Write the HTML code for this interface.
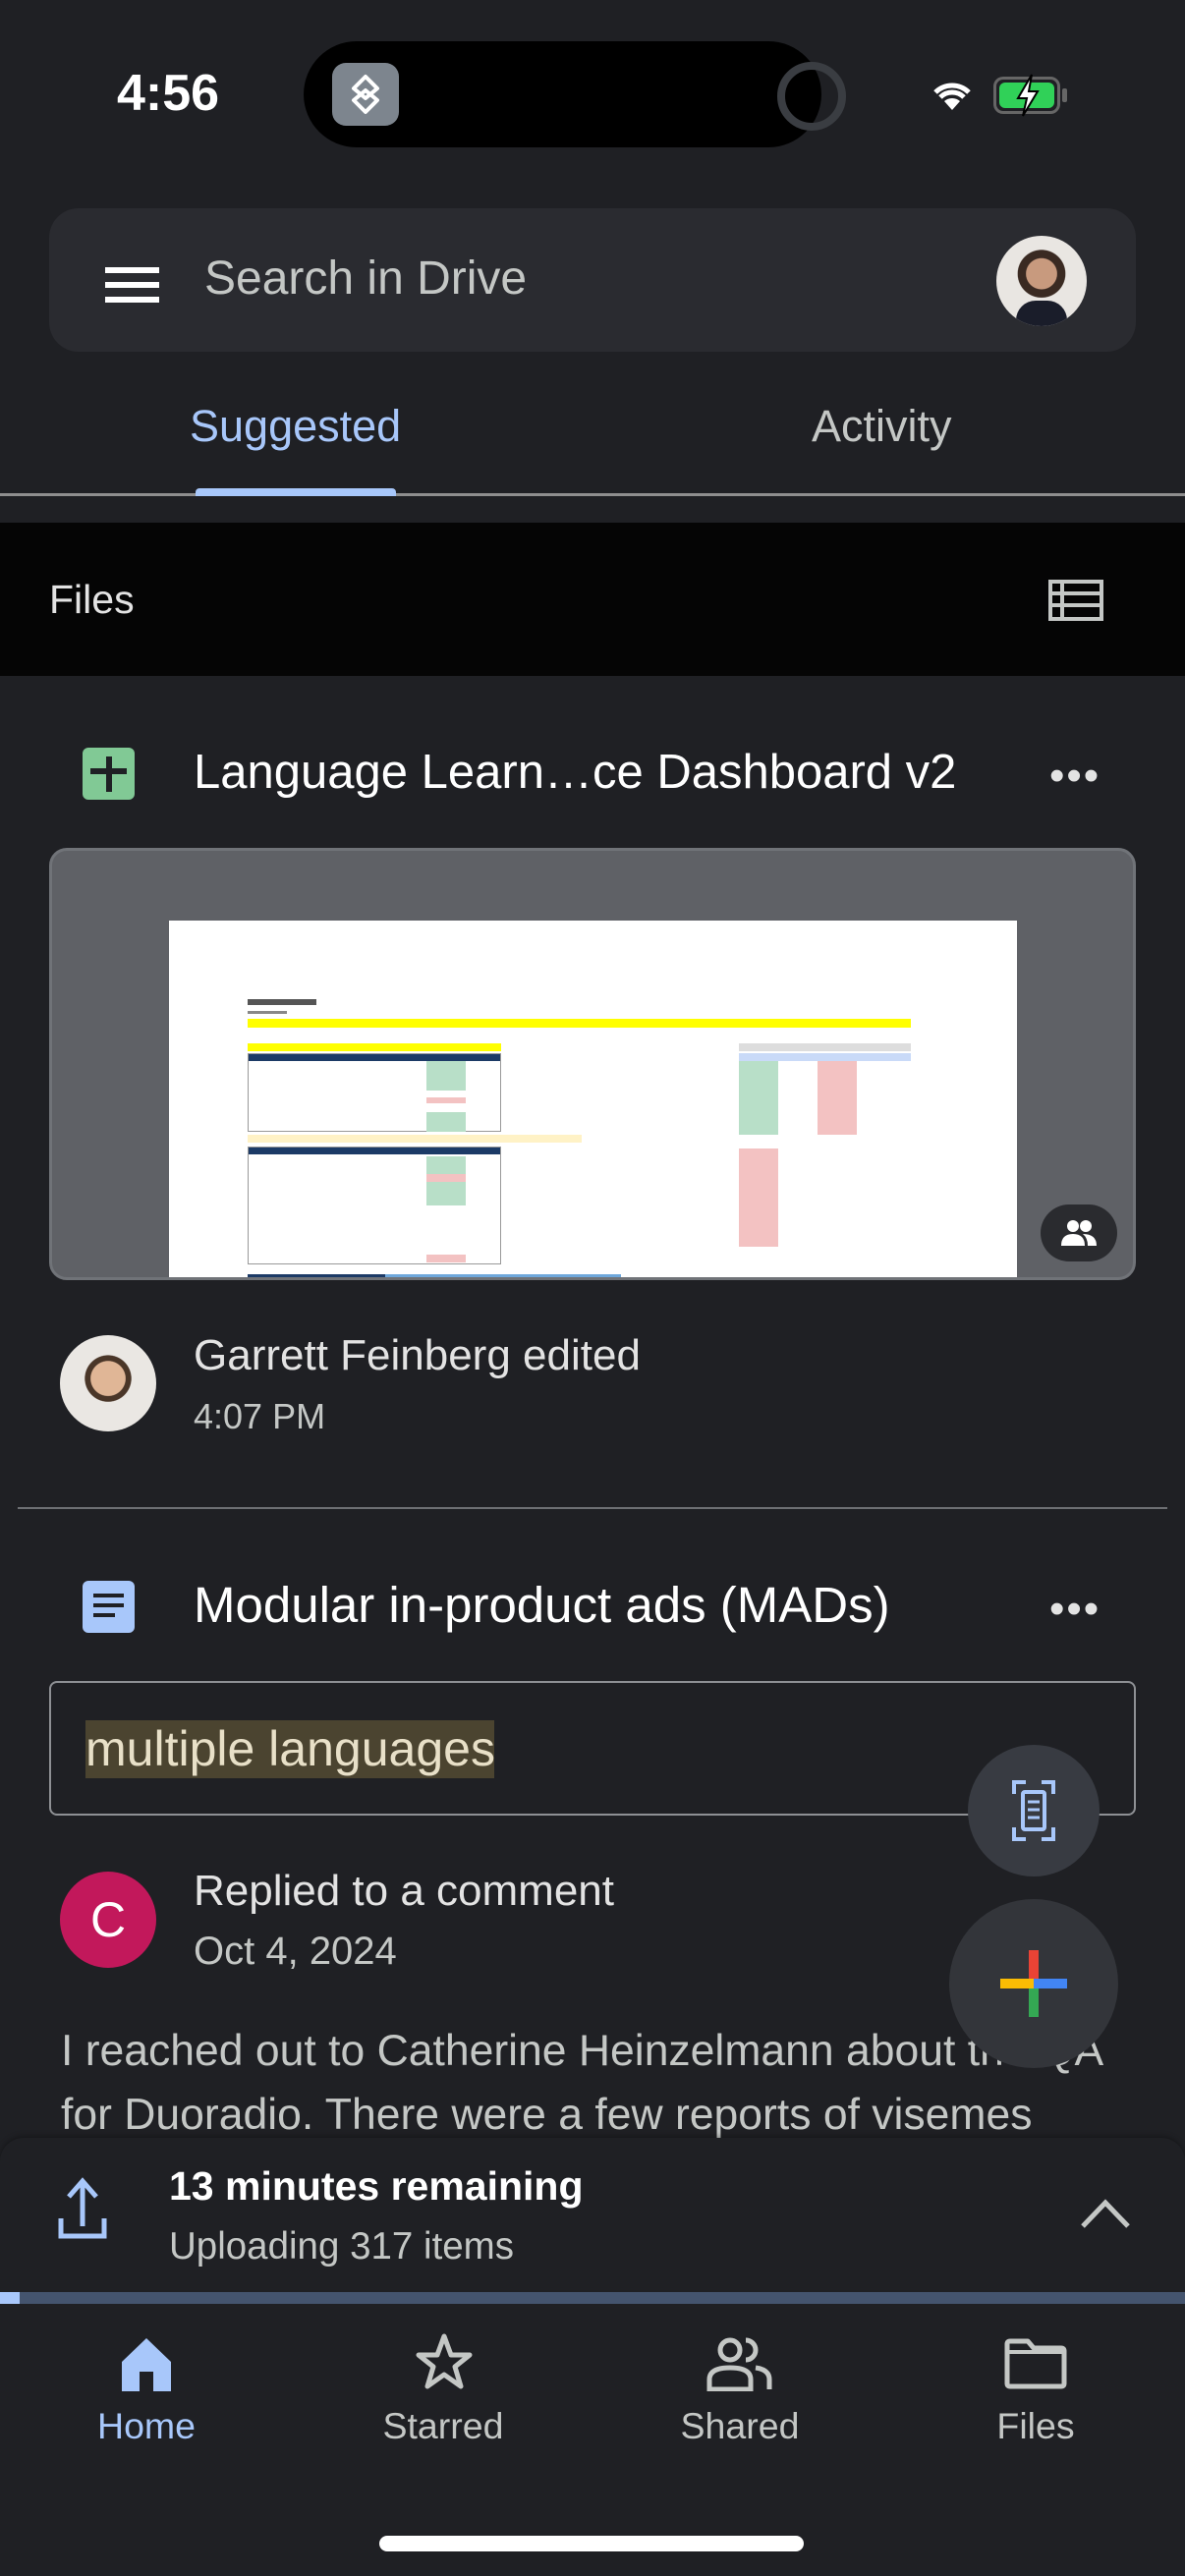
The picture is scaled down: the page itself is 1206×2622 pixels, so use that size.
<!DOCTYPE html>
<html><head><meta charset="utf-8"><style>
*{margin:0;padding:0;box-sizing:border-box}
body{width:1206px;height:2622px;background:#1f2024;font-family:"Liberation Sans",sans-serif;position:relative;overflow:hidden;color:#e3e3e3}
.a{position:absolute}
.t{white-space:nowrap}
</style></head><body>
<!-- status bar -->
<div class="a t" style="left:119px;top:65px;font-size:52px;font-weight:bold;color:#fff">4:56</div>
<div class="a" style="left:309px;top:42px;width:527px;height:108px;background:#000;border-radius:54px"></div>
<div class="a" style="left:338px;top:64px;width:68px;height:64px;background:#7d858e;border-radius:14px"></div>
<svg class="a" style="left:346px;top:70px" width="52" height="52" viewBox="0 0 52 52"><path d="M26 8 L38 20 L26 30 L14 20 Z M26 22 L38 32 L26 44 L14 32 Z" fill="none" stroke="#fff" stroke-width="4" stroke-linejoin="round"/></svg>
<div class="a" style="left:791px;top:63px;width:70px;height:70px;border:8px solid #3a3d42;border-radius:50%"></div>
<svg class="a" style="left:946px;top:76px" width="46" height="40" viewBox="0 0 46 40"><path d="M23 36 L15 27 A12 12 0 0 1 31 27 Z" fill="#fff"/><path d="M6 18 A24 24 0 0 1 40 18" stroke="#fff" stroke-width="5" fill="none"/><path d="M11 23 A17 17 0 0 1 35 23" stroke="#fff" stroke-width="5" fill="none"/></svg>
<div class="a" style="left:1011px;top:78px;width:68px;height:38px;border:3px solid #666;border-radius:10px;padding:3px"><div style="width:100%;height:100%;background:#30d158;border-radius:6px"></div></div>
<div class="a" style="left:1081px;top:90px;width:5px;height:14px;background:#666;border-radius:2px"></div>
<svg class="a" style="left:1030px;top:74px" width="32" height="46" viewBox="0 0 32 46"><path d="M20 2 L6 26 H15 L11 44 L26 19 H17 Z" fill="#fff" stroke="#000" stroke-width="2"/></svg>
<!-- search -->
<div class="a" style="left:50px;top:212px;width:1106px;height:146px;background:#2a2b30;border-radius:30px"></div>
<div class="a" style="left:107px;top:272px;width:55px;height:6px;background:#fff"></div>
<div class="a" style="left:107px;top:287px;width:55px;height:6px;background:#fff"></div>
<div class="a" style="left:107px;top:302px;width:55px;height:6px;background:#fff"></div>
<div class="a t" style="left:208px;top:256px;font-size:48px;color:#c4c7c5">Search in Drive</div>
<div class="a" style="left:1014px;top:240px;width:92px;height:92px;border-radius:50%;background:radial-gradient(circle at 50% 42%,#c89a7e 0 22%,#3a2a22 23% 34%,#e9e6e2 35%);overflow:hidden"><div style="position:absolute;left:20px;top:66px;width:52px;height:30px;background:#1a1d2a;border-radius:20px 20px 0 0"></div></div>
<!-- tabs -->
<div class="a t" style="left:193px;top:408px;font-size:45px;color:#a8c7fa">Suggested</div>
<div class="a t" style="left:826px;top:408px;font-size:45px;color:#c4c7c5">Activity</div>
<div class="a" style="left:0;top:502px;width:1206px;height:3px;background:#8e8e8e"></div>
<div class="a" style="left:199px;top:497px;width:204px;height:8px;background:#a8c7fa;border-radius:4px 4px 0 0"></div>
<!-- files bar -->
<div class="a" style="left:0;top:532px;width:1206px;height:156px;background:#050505"></div>
<div class="a t" style="left:50px;top:587px;font-size:41px;color:#e3e3e3">Files</div>
<svg class="a" style="left:1067px;top:590px" width="56" height="42" viewBox="0 0 56 42"><rect x="2" y="2" width="52" height="38" fill="none" stroke="#c4c7c5" stroke-width="4"/><path d="M2 14H54M2 26H54M14 2V40" stroke="#c4c7c5" stroke-width="4"/></svg>
<!-- card 1 -->
<div class="a" style="left:84px;top:761px;width:53px;height:53px;background:#81c995;border-radius:6px"></div>
<div class="a" style="left:108px;top:770px;width:6px;height:36px;background:#1f2024"></div>
<div class="a" style="left:92px;top:782px;width:37px;height:6px;background:#1f2024"></div>
<div class="a t" style="left:197px;top:758px;font-size:49px;color:#fff">Language Learn…ce Dashboard v2</div>
<div class="a t" style="left:1068px;top:765px;font-size:44px;color:#e3e3e3;letter-spacing:2px">•••</div>
<div class="a" style="left:50px;top:863px;width:1106px;height:440px;background:#5f6166;border:3px solid #707378;border-radius:18px;overflow:hidden">
 <div class="a" style="left:119px;top:71px;width:863px;height:380px;background:#fff">
  <div class="a" style="left:80px;top:80px;width:70px;height:6px;background:#555"></div>
  <div class="a" style="left:80px;top:92px;width:40px;height:3px;background:#888"></div>
  <div class="a" style="left:80px;top:100px;width:675px;height:9px;background:#ffff00"></div>
  <div class="a" style="left:80px;top:125px;width:258px;height:8px;background:#ffff00"></div>
  <div class="a" style="left:80px;top:135px;width:258px;height:8px;background:#1c3a66"></div>
  <div class="a" style="left:80px;top:135px;width:258px;height:80px;border:1px solid #999"></div>
  <div class="a" style="left:262px;top:143px;width:40px;height:30px;background:#b8dfc8"></div>
  <div class="a" style="left:262px;top:180px;width:40px;height:6px;background:#f3c2c2"></div>
  <div class="a" style="left:262px;top:195px;width:40px;height:20px;background:#b8dfc8"></div>
  <div class="a" style="left:80px;top:218px;width:340px;height:8px;background:#fff2c6"></div>
  <div class="a" style="left:80px;top:230px;width:258px;height:8px;background:#1c3a66"></div>
  <div class="a" style="left:80px;top:230px;width:258px;height:120px;border:1px solid #999"></div>
  <div class="a" style="left:262px;top:240px;width:40px;height:50px;background:#b8dfc8"></div>
  <div class="a" style="left:262px;top:258px;width:40px;height:8px;background:#f3c2c2"></div>
  <div class="a" style="left:262px;top:340px;width:40px;height:8px;background:#f3c2c2"></div>
  <div class="a" style="left:580px;top:125px;width:175px;height:8px;background:#ddd"></div>
  <div class="a" style="left:580px;top:135px;width:175px;height:8px;background:#c9daf8"></div>
  <div class="a" style="left:580px;top:143px;width:40px;height:75px;background:#b8dfc8"></div>
  <div class="a" style="left:660px;top:143px;width:40px;height:75px;background:#f3c2c2"></div>
  <div class="a" style="left:580px;top:232px;width:40px;height:100px;background:#f3c2c2"></div>
  <div class="a" style="left:80px;top:360px;width:380px;height:12px;background:#6fa8dc"></div>
  <div class="a" style="left:80px;top:360px;width:140px;height:12px;background:#1c3a66"></div>
 </div>
 <div class="a" style="left:1006px;top:360px;width:78px;height:58px;background:#2a2b2f;border-radius:29px"></div>
 <svg class="a" style="left:1027px;top:374px" width="36" height="30" viewBox="0 0 36 30"><circle cx="12" cy="8" r="6" fill="#fff"/><circle cx="25" cy="8" r="6" fill="#fff"/><path d="M0 28 Q0 16 12 16 Q24 16 24 28Z M22 16 Q36 16 36 28 H27 Q27 20 22 16Z" fill="#fff"/></svg>
</div>
<div class="a" style="left:61px;top:1359px;width:98px;height:98px;border-radius:50%;background:radial-gradient(circle at 50% 45%,#e0b696 0 24%,#4a3628 25% 32%,#eae7e3 33%)"></div>
<div class="a t" style="left:197px;top:1355px;font-size:44px;color:#e3e3e3">Garrett Feinberg edited</div>
<div class="a t" style="left:197px;top:1421px;font-size:36px;color:#c4c7c5">4:07 PM</div>
<div class="a" style="left:18px;top:1534px;width:1170px;height:2px;background:#6d6f73"></div>
<!-- card 2 -->
<div class="a" style="left:84px;top:1609px;width:53px;height:53px;background:#a8c7fa;border-radius:6px"></div>
<div class="a" style="left:95px;top:1622px;width:31px;height:4px;background:#1f2024"></div>
<div class="a" style="left:95px;top:1632px;width:31px;height:4px;background:#1f2024"></div>
<div class="a" style="left:95px;top:1642px;width:22px;height:4px;background:#1f2024"></div>
<div class="a t" style="left:197px;top:1604px;font-size:51px;color:#fff">Modular in-product ads (MADs)</div>
<div class="a t" style="left:1068px;top:1613px;font-size:44px;color:#e3e3e3;letter-spacing:2px">•••</div>
<div class="a" style="left:50px;top:1711px;width:1106px;height:137px;border:2px solid #8e9094;border-radius:8px"></div>
<div class="a" style="left:87px;top:1751px;width:416px;height:59px;background:#4b4430"></div>
<div class="a t" style="left:87px;top:1751px;font-size:50px;color:#e8e0c8">multiple languages</div>
<div class="a" style="left:61px;top:1905px;width:98px;height:98px;border-radius:50%;background:#c2185b;color:#fff;font-size:50px;text-align:center;line-height:98px">C</div>
<div class="a t" style="left:197px;top:1900px;font-size:44px;color:#e3e3e3">Replied to a comment</div>
<div class="a t" style="left:197px;top:1964px;font-size:40px;color:#c4c7c5">Oct 4, 2024</div>
<div class="a t" style="left:62px;top:2063px;font-size:44.5px;color:#c4c7c5">I reached out to Catherine Heinzelmann about the QA</div>
<div class="a t" style="left:62px;top:2128px;font-size:44.5px;color:#c4c7c5">for Duoradio. There were a few reports of visemes</div>
<!-- FABs -->
<div class="a" style="left:985px;top:1776px;width:134px;height:134px;border-radius:50%;background:#383b42"></div>
<svg class="a" style="left:1030px;top:1812px" width="44" height="62" viewBox="0 0 44 62"><path d="M2 14V2H14M30 2H42V14M42 48V60H30M14 60H2V48" stroke="#a8c7fa" stroke-width="4" fill="none"/><rect x="11" y="12" width="22" height="38" rx="2" fill="none" stroke="#a8c7fa" stroke-width="4"/><path d="M16 22H28M16 30H28M16 38H28" stroke="#a8c7fa" stroke-width="3"/></svg>
<div class="a" style="left:966px;top:1933px;width:172px;height:172px;border-radius:50%;background:#33353a"></div>
<svg class="a" style="left:1012px;top:1979px" width="80" height="80" viewBox="0 0 80 80"><rect x="35" y="6" width="10" height="34" fill="#ea4335"/><rect x="35" y="40" width="10" height="34" fill="#34a853"/><rect x="6" y="35" width="34" height="10" fill="#fbbc04"/><rect x="40" y="35" width="34" height="10" fill="#4285f4"/></svg>
<!-- upload -->
<div class="a" style="left:0;top:2176px;width:1206px;height:446px;background:#1f2024;border-radius:24px 24px 0 0;box-shadow:0 -2px 6px rgba(0,0,0,.3)"></div>
<svg class="a" style="left:58px;top:2216px" width="52" height="64" viewBox="0 0 52 64"><path d="M26 50V6M12 20L26 4L40 20" stroke="#a8c7fa" stroke-width="5" fill="none"/><path d="M4 42V60H48V42" stroke="#a8c7fa" stroke-width="5" fill="none"/></svg>
<div class="a t" style="left:172px;top:2202px;font-size:41px;font-weight:bold;color:#fff">13 minutes remaining</div>
<div class="a t" style="left:172px;top:2265px;font-size:38.5px;color:#c4c7c5">Uploading 317 items</div>
<svg class="a" style="left:1098px;top:2236px" width="54" height="34" viewBox="0 0 54 34"><path d="M4 30L27 6L50 30" stroke="#c4c7c5" stroke-width="5" fill="none"/></svg>
<div class="a" style="left:0;top:2333px;width:1206px;height:12px;background:#44546e"></div>
<div class="a" style="left:0;top:2333px;width:20px;height:12px;background:#a8c7fa"></div>
<!-- nav -->
<svg class="a" style="left:122px;top:2378px" width="54" height="56" viewBox="0 0 54 56"><path d="M27 2L52 26V56H34V36H20V56H2V26Z" fill="#a8c7fa"/></svg>
<svg class="a" style="left:423px;top:2374px" width="58" height="60" viewBox="0 0 58 60"><path d="M29 4L36 23H55L40 35L46 55L29 43L12 55L18 35L3 23H22Z" fill="none" stroke="#c4c7c5" stroke-width="5" stroke-linejoin="round"/></svg>
<svg class="a" style="left:719px;top:2378px" width="68" height="56" viewBox="0 0 68 56"><circle cx="24" cy="14" r="10" fill="none" stroke="#c4c7c5" stroke-width="5"/><path d="M3 54V44Q3 32 24 32Q45 32 45 44V54Z" fill="none" stroke="#c4c7c5" stroke-width="5"/><path d="M40 4A10 10 0 0 1 40 24M50 32Q64 34 64 44V54" fill="none" stroke="#c4c7c5" stroke-width="5"/></svg>
<svg class="a" style="left:1022px;top:2380px" width="64" height="52" viewBox="0 0 64 52"><path d="M3 6Q3 3 6 3H24L30 10H58Q61 10 61 13V46Q61 49 58 49H6Q3 49 3 46Z" fill="none" stroke="#c4c7c5" stroke-width="5" stroke-linejoin="round"/><path d="M3 14H61" stroke="#c4c7c5" stroke-width="4"/></svg>
<div class="a t" style="left:89px;top:2448px;width:120px;text-align:center;font-size:37.5px;color:#a8c7fa">Home</div>
<div class="a t" style="left:361px;top:2448px;width:180px;text-align:center;font-size:37.5px;color:#c4c7c5">Starred</div>
<div class="a t" style="left:663px;top:2448px;width:180px;text-align:center;font-size:37.5px;color:#c4c7c5">Shared</div>
<div class="a t" style="left:964px;top:2448px;width:180px;text-align:center;font-size:37.5px;color:#c4c7c5">Files</div>
<div class="a" style="left:386px;top:2581px;width:432px;height:16px;background:#fff;border-radius:8px"></div>
</body></html>
